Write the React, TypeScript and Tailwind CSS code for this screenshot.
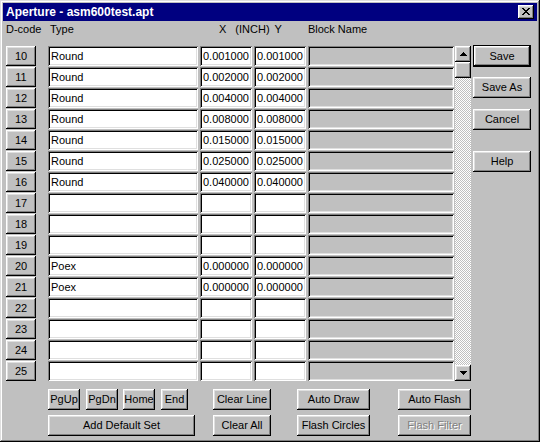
import React from 'react';

const raised =
  'shadow-[inset_-1px_-1px_#000,inset_1px_1px_#fff,inset_-2px_-2px_#808080,inset_2px_2px_#dfdfdf]';
const sunken =
  'shadow-[inset_1px_1px_#808080,inset_-1px_-1px_#fff,inset_2px_2px_#000,inset_-2px_-2px_#dfdfdf]';

const rows = [
  { code: 10, type: 'Round', x: '0.001000', y: '0.001000' },
  { code: 11, type: 'Round', x: '0.002000', y: '0.002000' },
  { code: 12, type: 'Round', x: '0.004000', y: '0.004000' },
  { code: 13, type: 'Round', x: '0.008000', y: '0.008000' },
  { code: 14, type: 'Round', x: '0.015000', y: '0.015000' },
  { code: 15, type: 'Round', x: '0.025000', y: '0.025000' },
  { code: 16, type: 'Round', x: '0.040000', y: '0.040000' },
  { code: 17, type: '', x: '', y: '' },
  { code: 18, type: '', x: '', y: '' },
  { code: 19, type: '', x: '', y: '' },
  { code: 20, type: 'Poex', x: '0.000000', y: '0.000000' },
  { code: 21, type: 'Poex', x: '0.000000', y: '0.000000' },
  { code: 22, type: '', x: '', y: '' },
  { code: 23, type: '', x: '', y: '' },
  { code: 24, type: '', x: '', y: '' },
  { code: 25, type: '', x: '', y: '' },
];

const Btn: React.FC<{ className?: string; children: React.ReactNode; disabled?: boolean }> = ({
  className = '',
  children,
  disabled,
}) => (
  <div
    className={`flex items-center justify-center bg-[#c0c0c0] ${raised} ${
      disabled ? 'text-[#808080] [text-shadow:1px_1px_0_#fff]' : 'text-black'
    } ${className}`}
  >
    {children}
  </div>
);

const Field: React.FC<{ className?: string; text?: string; gray?: boolean }> = ({
  className = '',
  text,
  gray,
}) => (
  <div
    className={`flex items-center pl-[3px] h-[20px] ${sunken} ${
      gray ? 'bg-[#c0c0c0]' : 'bg-white'
    } ${className}`}
  >
    {text}
  </div>
);

// 8x7 pixel close glyph
const closeGlyph = [
  [0, 0], [1, 0], [6, 0], [7, 0],
  [1, 1], [2, 1], [5, 1], [6, 1],
  [2, 2], [3, 2], [4, 2], [5, 2],
  [3, 3], [4, 3],
  [2, 4], [3, 4], [4, 4], [5, 4],
  [1, 5], [2, 5], [5, 5], [6, 5],
  [0, 6], [1, 6], [6, 6], [7, 6],
];

const Arrow: React.FC<{ down?: boolean }> = ({ down }) => (
  <svg width="7" height="4" viewBox="0 0 7 4" shapeRendering="crispEdges">
    {down ? (
      <path d="M0 0h7v1H6v1H5v1H4v1H3V3H2V2H1V1H0z" fill="#000" />
    ) : (
      <path d="M3 0h1v1h1v1h1v1h1v1H0V3h1V2h1V1h1z" fill="#000" />
    )}
  </svg>
);

export default function App() {
  return (
    <div
      className={`w-[540px] h-[442px] bg-[#c0c0c0] p-[3px] flex flex-col text-[11px] leading-none font-['Liberation_Sans',Arial,sans-serif] shadow-[inset_-1px_-1px_#000,inset_1px_1px_#dfdfdf,inset_-2px_-2px_#808080,inset_2px_2px_#fff]`}
    >
      {/* Title bar */}
      <div className="h-[18px] bg-[#000080] flex items-center justify-between pl-[3px] pr-[3px]">
        <span className="text-white font-bold text-[12px]">Aperture - asm600test.apt</span>
        <div className={`w-[16px] h-[14px] bg-[#c0c0c0] flex items-center justify-center ${raised}`}>
          <svg width="8" height="7" viewBox="0 0 8 7" shapeRendering="crispEdges" className="-mt-px">
            {closeGlyph.map(([x, y], i) => (
              <rect key={i} x={x} y={y} width="1" height="1" fill="#000" />
            ))}
          </svg>
        </div>
      </div>

      <div className="flex flex-col pl-[3px]">
        {/* Header */}
        <div className="h-[17px] flex items-center">
          <span className="w-[44px]">D-code</span>
          <span className="w-[169px]">Type</span>
          <span>X</span>
          <span className="ml-[9px]">(INCH)</span>
          <span className="ml-[5px]">Y</span>
          <span className="ml-[26px]">Block Name</span>
        </div>

        {/* Table + side buttons */}
        <div className="flex mt-[8px]">
          <div className="flex flex-col gap-px">
            {rows.map((r) => (
              <div key={r.code} className="flex h-[20px]">
                <Btn className="w-[30px] h-[20px] mr-[12px]">{r.code}</Btn>
                <Field className="w-[150px]" text={r.type} />
                <Field className="w-[52px] ml-[2px]" text={r.x} />
                <Field className="w-[52px] ml-[2px]" text={r.y} />
                <Field className="w-[146px] ml-[2px]" gray />
              </div>
            ))}
          </div>

          {/* Scrollbar */}
          <div className="w-[16px] ml-px flex flex-col bg-[repeating-conic-gradient(#c0c0c0_0%_25%,#ffffff_0%_50%)] bg-[length:2px_2px]">
            <Btn className="w-[16px] h-[16px]">
              <Arrow />
            </Btn>
            <div className={`w-[16px] h-[16px] bg-[#c0c0c0] ${raised}`} />
            <div className="flex-1" />
            <Btn className="w-[16px] h-[16px]">
              <Arrow down />
            </Btn>
          </div>

          {/* Right column */}
          <div className="flex flex-col ml-[2px] -mt-px">
            <div className="w-[58px] h-[22px] border border-black">
              <Btn className="w-full h-full">Save</Btn>
            </div>
            <Btn className="w-[58px] h-[21px] mt-[10px]">Save As</Btn>
            <Btn className="w-[58px] h-[21px] mt-[11px]">Cancel</Btn>
            <Btn className="w-[58px] h-[21px] mt-[21px]">Help</Btn>
          </div>
        </div>

        {/* Bottom buttons */}
        <div className="flex mt-[8px] ml-[42px]">
          <div className="flex flex-col gap-[5px]">
            <div className="flex">
              <Btn className="w-[32px] h-[21px]">PgUp</Btn>
              <Btn className="w-[32px] h-[21px] ml-[6px]">PgDn</Btn>
              <Btn className="w-[32px] h-[21px] ml-[5px]">Home</Btn>
              <Btn className="w-[27px] h-[21px] ml-[6px]">End</Btn>
            </div>
            <Btn className="w-[147px] h-[21px]">Add Default Set</Btn>
          </div>
          <div className="flex flex-col gap-[5px] ml-[18px]">
            <Btn className="w-[58px] h-[21px]">Clear Line</Btn>
            <Btn className="w-[58px] h-[21px]">Clear All</Btn>
          </div>
          <div className="flex flex-col gap-[5px] ml-[26px]">
            <Btn className="w-[73px] h-[21px]">Auto Draw</Btn>
            <Btn className="w-[73px] h-[21px]">Flash Circles</Btn>
          </div>
          <div className="flex flex-col gap-[5px] ml-[28px]">
            <Btn className="w-[73px] h-[21px]">Auto Flash</Btn>
            <Btn className="w-[73px] h-[21px]" disabled>
              Flash Filter
            </Btn>
          </div>
        </div>
      </div>
    </div>
  );
}
